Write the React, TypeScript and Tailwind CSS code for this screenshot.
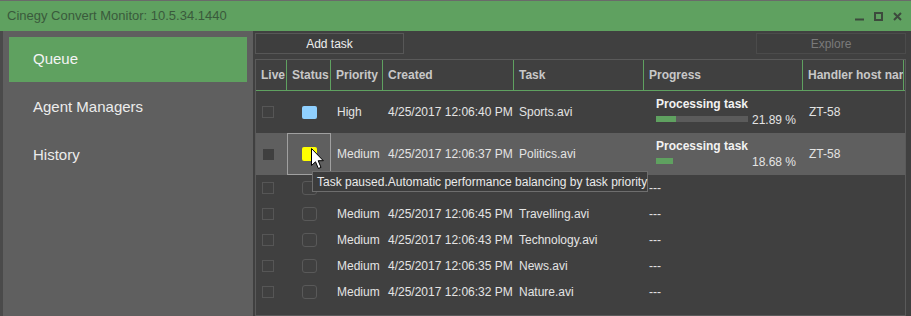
import React from "react";

type Row = {
  priority: string;
  created: string;
  task: string;
  status: "blue" | "yellow" | "none";
  progress?: { pct: number; label: string };
  host?: string;
  selected?: boolean;
};

const rows: Row[] = [
  { priority: "High", created: "4/25/2017 12:06:40 PM", task: "Sports.avi", status: "blue", progress: { pct: 21.89, label: "21.89 %" }, host: "ZT-58" },
  { priority: "Medium", created: "4/25/2017 12:06:37 PM", task: "Politics.avi", status: "yellow", progress: { pct: 18.68, label: "18.68 %" }, host: "ZT-58", selected: true },
  { priority: "Medium", created: "4/25/2017 12:06:47 PM", task: "Wildlife.avi", status: "none" },
  { priority: "Medium", created: "4/25/2017 12:06:45 PM", task: "Travelling.avi", status: "none" },
  { priority: "Medium", created: "4/25/2017 12:06:43 PM", task: "Technology.avi", status: "none" },
  { priority: "Medium", created: "4/25/2017 12:06:35 PM", task: "News.avi", status: "none" },
  { priority: "Medium", created: "4/25/2017 12:06:32 PM", task: "Nature.avi", status: "none" },
];

function WindowControls() {
  return (
    <div className="flex items-center gap-[10px] text-[#3d4a3d]">
      <svg width="9" height="9" viewBox="0 0 9 9">
        <rect x="0" y="6.5" width="9" height="2" fill="currentColor" />
      </svg>
      <svg width="9" height="9" viewBox="0 0 9 9">
        <rect x="1" y="1" width="7" height="7" fill="none" stroke="currentColor" strokeWidth="2" />
      </svg>
      <svg width="9" height="9" viewBox="0 0 9 9">
        <path d="M1 1 L8 8 M8 1 L1 8" stroke="currentColor" strokeWidth="2" />
      </svg>
    </div>
  );
}

function StatusBox({ status }: { status: Row["status"] }) {
  if (status === "blue") return <div className="w-[15px] h-[13px] rounded-[2px] bg-[#8fd0ff]" />;
  if (status === "yellow") return <div className="w-[15px] h-[14px] rounded-[2px] bg-[#ffff00]" />;
  return <div className="w-[15px] h-[14px] rounded-[3px] border border-[#595959]" />;
}

export default function App() {
  return (
    <div className="relative w-[911px] h-[316px] overflow-hidden flex flex-col bg-[#404040] font-['Liberation_Sans',sans-serif]">
      <div className="h-[31px] shrink-0 border-t border-[#6a6a6a] bg-[#5fa160] flex items-center justify-between pl-[7px] pr-[9px]">
        <span className="text-[13px] text-[#3a5a3c]">Cinegy Convert Monitor: 10.5.34.1440</span>
        <WindowControls />
      </div>

      <div className="flex flex-1 min-h-0">
        <div className="w-[3px] bg-[#4a4a4a]" />
        <aside className="w-[250px] bg-[#5f5f5f] pt-[6px] px-[6px] flex flex-col gap-[3px]">
          <div className="h-[45px] bg-[#5fa160] pl-[24px] flex items-center text-[15px] text-[#f4f4f4]">Queue</div>
          <div className="h-[45px] pl-[24px] flex items-center text-[15px] text-[#ececec]">Agent Managers</div>
          <div className="h-[45px] pl-[24px] flex items-center text-[15px] text-[#ececec]">History</div>
        </aside>

        <main className="flex-1 pl-[2px] pr-[5px] pt-[2px] flex flex-col">
          <div className="h-[21px] flex justify-between">
            <button className="w-[149px] border border-[#575757] bg-[#3e3e3e] text-[12px] text-[#eeeeee]">Add task</button>
            <button className="w-[150px] border border-[#4b4b4b] bg-[#3e3e3e] text-[12px] text-[#7a7a7a]">Explore</button>
          </div>

          <div className="mt-[5px] flex-1 border border-[#5a5a5a] flex flex-col text-[12px]">
            <div className="h-[31px] flex border-b border-[#5fa160] font-bold text-[#c8c8c8]">
              <div className="w-[31px] pl-[5px] flex items-center border-r border-[#5fa160]">Live</div>
              <div className="w-[44px] pl-[5px] flex items-center border-r border-[#5fa160]">Status</div>
              <div className="w-[52px] pl-[5px] flex items-center border-r border-[#5fa160]">Priority</div>
              <div className="w-[131px] pl-[5px] flex items-center border-r border-[#5fa160]">Created</div>
              <div className="w-[130px] pl-[5px] flex items-center border-r border-[#5fa160]">Task</div>
              <div className="w-[159px] pl-[5px] flex items-center border-r border-[#5fa160]">Progress</div>
              <div className="w-[101px] pl-[5px] flex items-center border-r border-[#5fa160] overflow-hidden whitespace-nowrap">Handler host name</div>
            </div>

            {rows.map((r, i) => (
              <div
                key={i}
                className={`flex text-[#e4e4e4] whitespace-nowrap ${r.progress ? "h-[42px]" : "h-[26px]"} ${r.selected ? "bg-[#5f5f5f]" : ""}`}
              >
                <div className="w-[31px] pl-[6px] flex items-center">
                  {r.selected ? (
                    <div className="w-[11px] h-[11px] ml-[1px] bg-[#3f3f3f]" />
                  ) : (
                    <div className="w-[12px] h-[12px] border border-[#565656]" />
                  )}
                </div>
                <div className={`w-[44px] flex items-center justify-center ${r.selected ? "border border-[#a0a0a0]" : ""}`}>
                  <StatusBox status={r.status} />
                </div>
                <div className="w-[52px] pl-[6px] flex items-center">{r.priority}</div>
                <div className="w-[131px] pl-[5px] flex items-center">{r.created}</div>
                <div className="w-[130px] pl-[5px] flex items-center">{r.task}</div>
                {r.progress ? (
                  <div className="w-[159px] pl-[12px] flex flex-col justify-center">
                    <div className="font-bold text-[#f2f2f2] leading-[14px]">Processing task</div>
                    <div className="flex items-start mt-[2px]">
                      <div className={`w-[92px] h-[6px] mt-[3px] ${r.selected ? "bg-[#5f5f5f]" : "bg-[#5b5b5b]"}`}>
                        <div className="h-full bg-[#5fa160]" style={{ width: `${r.progress.pct}%` }} />
                      </div>
                      <span className="ml-[4px] leading-[14px]">{r.progress.label}</span>
                    </div>
                  </div>
                ) : (
                  <div className="w-[159px] pl-[5px] flex items-center">---</div>
                )}
                <div className="w-[101px] pl-[6px] flex items-center">{r.host ?? ""}</div>
              </div>
            ))}
          </div>
        </main>
      </div>

      <div className="absolute left-[312px] top-[171px] w-[336px] h-[21px] bg-[#3c3c3c] border border-[#6e6e6e] pl-[4px] flex items-center text-[12px] text-[#eaeaea] whitespace-nowrap">
        Task paused.Automatic performance balancing by task priority
      </div>

      <svg className="absolute left-[311px] top-[148px]" width="13" height="22" viewBox="0 0 13 22">
        <path d="M0.5 0.5 V17.5 L4.5 13.8 L7.4 20.5 L10 19.4 L7.2 12.7 H12.3 Z" fill="#ffffff" stroke="#000000" strokeWidth="1" strokeLinejoin="round" />
      </svg>
    </div>
  );
}
